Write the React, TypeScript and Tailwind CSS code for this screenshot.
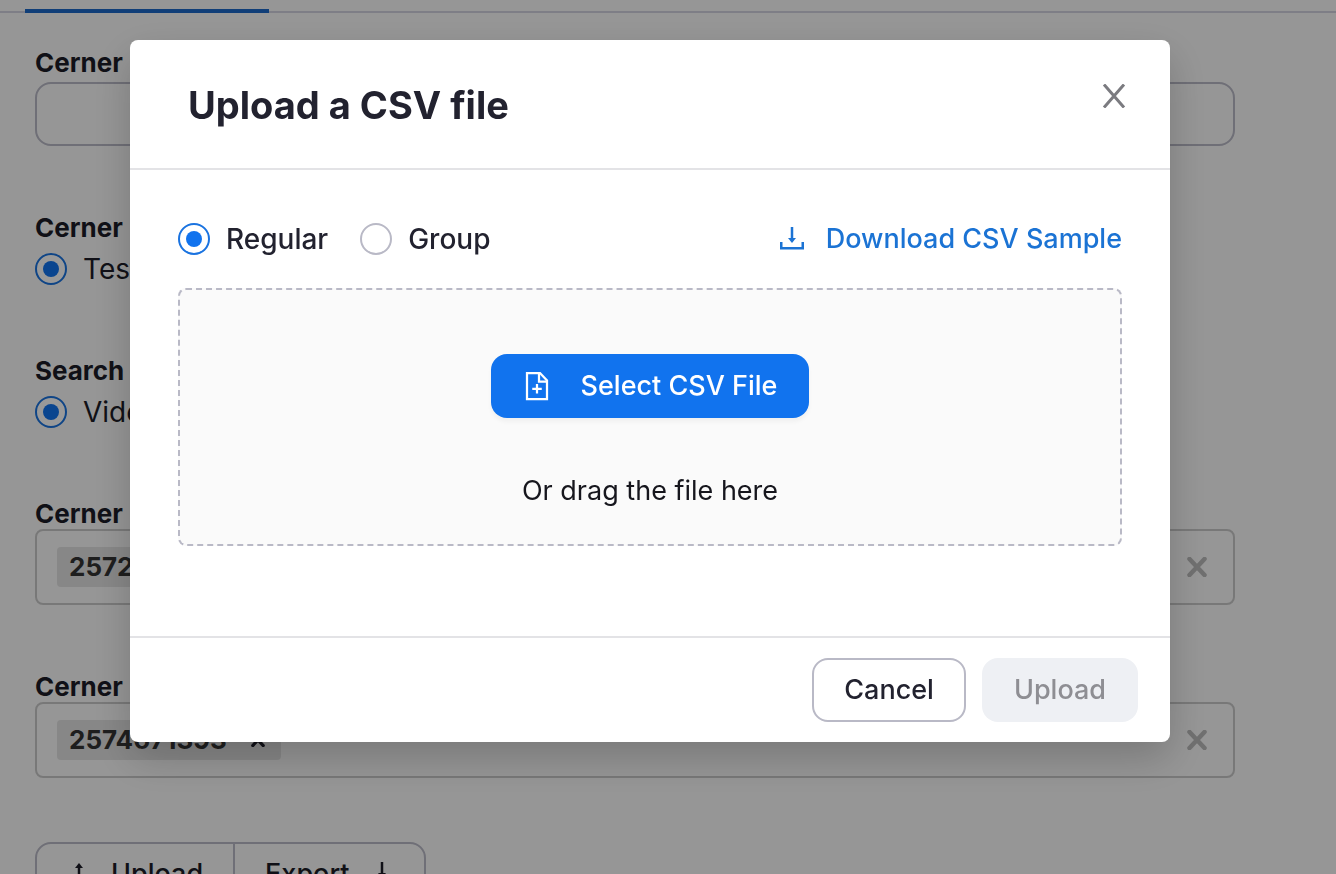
import { useState } from "react";
import type { ReactNode } from "react";

interface RadioProps {
  name: string;
  label: string;
  checked: boolean;
  onChange?: () => void;
  light?: boolean;
}

function Radio({ name, label, checked, onChange, light }: RadioProps) {
  return (
    <label className={`flex items-center gap-4 text-[28px] leading-8 ${light ? "font-normal" : "font-medium"}`}>
      <input
        type="radio"
        name={name}
        checked={checked}
        onChange={() => onChange?.()}
        className="grid size-8 shrink-0 appearance-none place-content-center rounded-full border-2 border-[#b9b9c6] bg-white before:size-4 before:rounded-full checked:border-[#1a73e0] checked:before:bg-[#1173ee]"
      />
      {label}
    </label>
  );
}

function Cross({ className }: { className: string }) {
  return (
    <svg viewBox="0 0 24 24" fill="none" stroke="currentColor" strokeWidth={3} className={className} aria-hidden="true">
      <path d="M2 0.5 22 23.5M22 0.5 2 23.5" />
    </svg>
  );
}

function ClearIcon({ className }: { className: string }) {
  return (
    <svg viewBox="0 0 20 20" fill="none" stroke="currentColor" strokeWidth={4.5} strokeLinecap="round" className={className} aria-hidden="true">
      <path d="M2.5 2 17.5 18M17.5 2 2.5 18" />
    </svg>
  );
}

function TrayArrow({ up, className }: { up?: boolean; className: string }) {
  return (
    <svg viewBox="0 0 24 24" fill="none" stroke="currentColor" strokeWidth={2.5} className={className} aria-hidden="true">
      <path d="M1.25 15V21.25H22.75V15" />
      {up ? (
        <>
          <path d="M12 17V4" />
          <path d="M8 6 12 1 16 6Z" fill="currentColor" stroke="none" />
        </>
      ) : (
        <>
          <path d="M12 0V12" />
          <path d="M8 11 12 16 16 11Z" fill="currentColor" stroke="none" />
        </>
      )}
    </svg>
  );
}

function FilePlus({ className }: { className: string }) {
  return (
    <svg viewBox="0 0 24 30" fill="none" stroke="currentColor" strokeWidth={2.25} className={className} aria-hidden="true">
      <path d="M2 2H15L22 9.5V28H2Z" />
      <path d="M14 2V10.5H22" />
      <path d="M12 13V22.5M7.25 17.75H16.75" />
    </svg>
  );
}

function Field({ title, children }: { title: string; children: ReactNode }) {
  return (
    <section>
      <h3 className="text-[26px] leading-[30px] font-bold">{title}</h3>
      {children}
    </section>
  );
}

function TagSelect({ value }: { value: string }) {
  return (
    <div className="flex h-[76px] items-center justify-between rounded-lg border-2 border-[#c9c9c9] pr-[26px] pl-5">
      <span className="flex h-10 items-center gap-6 rounded bg-[#e2e2e2] pr-4 pl-3 text-[26px] leading-8 font-bold text-[#333]">
        {value}
        <button type="button" aria-label="Remove" className="text-[#1c1c27]">
          <ClearIcon className="size-3.5" />
        </button>
      </span>
      <button type="button" aria-label="Clear all" className="text-[#bbb]">
        <ClearIcon className="size-5" />
      </button>
    </div>
  );
}

function SettingsForm() {
  return (
    <div className="h-full overflow-hidden bg-[#fafafa] text-[#1c1c27]">
      <div className="flex h-[13px] items-end border-b-2 border-[#d3d3df] pl-[25px]">
        <div className="-mb-0.5 h-1 w-[244px] bg-[#1b68c9]" />
      </div>
      <form className="pt-[35px] pr-[101px] pl-[35px]">
        <div className="flex flex-col gap-[67px]">
          <Field title="Cerner">
            <input
              type="text"
              aria-label="Cerner"
              className="mt-1 block h-16 w-full rounded-2xl border-2 border-[#b9b9c6] px-4 text-[28px]"
            />
          </Field>
          <Field title="Cerner">
            <div className="mt-2.5 mb-1">
              <Radio name="environment" label="Test" checked light />
            </div>
          </Field>
          <Field title="Search">
            <div className="mt-2.5 mb-1">
              <Radio name="search" label="Video" checked light />
            </div>
          </Field>
          <Field title="Cerner">
            <TagSelect value="2572671393" />
          </Field>
          <Field title="Cerner">
            <TagSelect value="2574671393" />
          </Field>
        </div>
        <div className="mt-16 flex text-[27px] font-medium">
          <button type="button" className="flex h-16 items-center gap-5 rounded-l-2xl border-2 border-[#b9b9c6] px-[30px]">
            <TrayArrow up className="size-6" />
            Upload
          </button>
          <button type="button" className="-ml-0.5 flex h-16 items-center gap-5 rounded-r-2xl border-2 border-[#b9b9c6] px-[30px]">
            Export
            <TrayArrow className="size-6" />
          </button>
        </div>
      </form>
    </div>
  );
}

function UploadModal() {
  const [mode, setMode] = useState("regular");

  return (
    <div
      role="dialog"
      aria-modal="true"
      aria-labelledby="upload-title"
      className="w-full max-w-[1040px] rounded-lg bg-white text-[#22222f] shadow-[0_16px_40px_rgba(0,0,0,0.2)]"
    >
      <header className="flex items-start justify-between border-b-2 border-[#e3e3e6] pt-10 pr-11 pb-[38px] pl-[58px]">
        <h2 id="upload-title" className="text-[38px] leading-[50px] font-bold">
          Upload a CSV file
        </h2>
        <button type="button" aria-label="Close" className="mt-1 text-[#7b7b80]">
          <Cross className="size-6" />
        </button>
      </header>

      <div className="px-12 pt-12 pb-[90px]">
        <div className="mb-7 flex h-[42px] items-center justify-between">
          <div className="flex gap-8">
            <Radio name="mode" label="Regular" checked={mode === "regular"} onChange={() => setMode("regular")} />
            <Radio name="mode" label="Group" checked={mode === "group"} onChange={() => setMode("group")} />
          </div>
          <a href="#sample" className="flex items-center gap-[22px] text-[27px] leading-8 font-medium text-[#1b73d4]">
            <TrayArrow className="size-6" />
            Download CSV Sample
          </a>
        </div>

        <div className="flex flex-col items-center rounded-lg border-2 border-dashed border-[#b9b9c6] bg-[#fafafa] pt-16 pb-8">
          <button
            type="button"
            className="flex h-16 items-center gap-8 rounded-2xl bg-[#1173ee] pr-8 pl-[34px] text-[27px] font-medium text-white shadow-[0_4px_4px_rgba(0,0,0,0.04)]"
          >
            <FilePlus className="h-[30px] w-6" />
            Select CSV File
          </button>
          <p className="mt-[52px] text-[27px] leading-[42px] text-[#16161d]">Or drag the file here</p>
        </div>
      </div>

      <footer className="flex justify-end gap-4 border-t-2 border-[#e3e3e6] px-8 py-5 text-[27px]">
        <button type="button" className="h-16 rounded-2xl border-2 border-[#b9b9c6] px-[30px] font-medium">
          Cancel
        </button>
        <button type="button" disabled className="h-16 rounded-2xl bg-[#eef0f4] px-8 font-medium text-[#8e8e93]">
          Upload
        </button>
      </footer>
    </div>
  );
}

export default function App() {
  return (
    <div className="h-screen overflow-hidden font-['Inter',sans-serif]">
      <SettingsForm />
      <div className="fixed inset-0 flex items-start justify-center bg-black/40 pt-10 pr-9">
        <UploadModal />
      </div>
    </div>
  );
}
